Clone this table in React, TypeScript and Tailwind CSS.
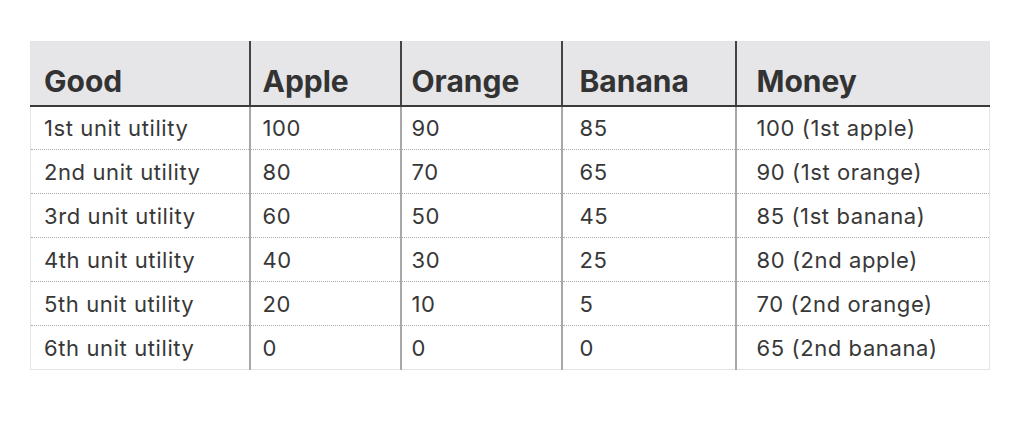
import React from "react";

const cols = ["Good", "Apple", "Orange", "Banana", "Money"];
const widths = ["w-[219px]", "w-[151px]", "w-[161px]", "w-[174px]", "w-[254px]"];
const pads = ["pl-[13px]", "pl-[12px]", "pl-[10px]", "pl-[17px]", "pl-[20px]"];

const rows = [
  ["1st unit utility", "100", "90", "85", "100 (1st apple)"],
  ["2nd unit utility", "80", "70", "65", "90 (1st orange)"],
  ["3rd unit utility", "60", "50", "45", "85 (1st banana)"],
  ["4th unit utility", "40", "30", "25", "80 (2nd apple)"],
  ["5th unit utility", "20", "10", "5", "70 (2nd orange)"],
  ["6th unit utility", "0", "0", "0", "65 (2nd banana)"],
];

export default function App() {
  return (
    <div className="w-[1024px] h-[430px] bg-white pl-[30px] pt-[41px] font-['Inter',sans-serif] text-[#333]">
      <table className="table-fixed border-collapse w-[959px] border border-[#e4e4e4]">
        <thead>
          <tr className="bg-[#e6e6e8] h-[64px]">
            {cols.map((c, i) => (
              <th
                key={c}
                className={`${widths[i]} ${pads[i]} text-left align-bottom pb-[9px] text-[30px] leading-none font-bold text-[#333] border-b-[2px] border-b-[#3a3a3a] ${
                  i > 0 ? "border-l-[2px] border-l-[#444]" : ""
                }`}
              >
                {c}
              </th>
            ))}
          </tr>
        </thead>
        <tbody>
          {rows.map((r, ri) => (
            <tr key={ri} className="h-[44px]">
              {r.map((cell, i) => (
                <td
                  key={i}
                  className={`${pads[i]} text-[22px] leading-none tracking-[0.6px] text-[#383838] ${
                    ri < rows.length - 1 ? "border-b [border-bottom-style:dotted] border-b-[#aaa]" : ""
                  } ${i > 0 ? "border-l-[2px] border-l-[#a8a8a8]" : ""}`}
                >
                  {cell}
                </td>
              ))}
            </tr>
          ))}
        </tbody>
      </table>
    </div>
  );
}
